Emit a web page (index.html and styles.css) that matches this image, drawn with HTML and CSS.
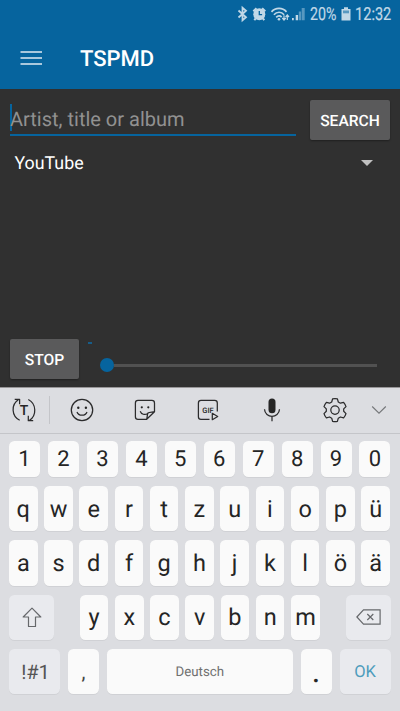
FILE: index.html
```html
<!DOCTYPE html>
<html lang="de">
<head>
<meta charset="utf-8">
<title>TSPMD</title>
<link rel="stylesheet" href="styles.css">
</head>
<body>
<div class="screen">
  <header class="header">
    <div class="status">
      <svg class="status-icons" width="70" height="18" viewBox="0 0 70 18">
        <path d="M1.500 5.500 9 12.300l-3.500 3V2.800L9 5.800 1.500 12.500" fill="none" stroke="currentColor" stroke-width="1.800"/>
        <circle cx="22.300" cy="9.200" r="6" fill="currentColor"/>
        <path d="M16.300 6.200l3.200-3M25.100 3.200l3.200 3M18.700 13.500l-1.400 1.700M25.900 13.500l1.400 1.700" stroke="currentColor" stroke-width="2"/>
        <path d="M22.300 6v3.700h2.800" stroke="#06649e" stroke-width="1.300" fill="none"/>
        <path d="M34.500 6.900c4-4.600 11-4.600 15 0M36.900 9.700c3-3.300 7.400-3.300 10.200 0M39.200 12.400c1.800-1.900 4-1.900 5.400-.3" fill="none" stroke="currentColor" stroke-width="1.700"/>
        <circle cx="42" cy="14.300" r="1.300" fill="currentColor"/>
        <path d="M47 10.300v4.500M45.300 13 47 15l1.700-2M50.300 15v-4.500M48.600 12l1.700-2 1.700 2" fill="none" stroke="currentColor" stroke-width="1.200"/>
        <path d="M55 13h1.800v2.300H55zM58.700 10h2.400v5.300h-2.400z" fill="currentColor"/>
        <path d="M61.800 6.500h2.300v8.800h-2.300zM64.700 3h3v12.300h-3z" fill="#5798c0"/>
      </svg>
      <span class="percent">20%</span>
      <svg class="battery" width="10" height="14" viewBox="0 0 10 14">
        <path d="M3 .2h4V2h2.500v11.500h-9V2H3z" fill="currentColor"/>
        <path d="M2 3.500h6v2.800H2z" fill="#5798c0"/>
      </svg>
      <span class="clock">12:32</span>
    </div>
    <div class="appbar">
      <svg class="menu" width="22" height="16" viewBox="0 0 22 16"><path d="M.5 2H22M.5 8H22M.5 14H22" stroke="#a9c8dd" stroke-width="2.200"/></svg>
      <h1>TSPMD</h1>
    </div>
  </header>

  <main class="content">
    <div class="search-row">
      <div class="field"><span class="caret"></span><span class="hint">Artist, title or album</span></div>
      <div class="button search">SEARCH</div>
    </div>
    <div class="select"><span>YouTube</span><i class="arrow"></i></div>
    <div class="player">
      <div class="button stop">STOP</div>
      <div class="progress"><span class="time"></span><div class="slider"><i class="thumb"></i><i class="track"></i></div></div>
    </div>
  </main>

  <section class="keyboard">
    <div class="tools">
      <svg width="26" height="26" viewBox="0 0 26 26">
        <path d="M8.700 23.200C.3 19 0 7.500 7.300 2.700M3.700 2.300h4.900v4.900M17.300 2.500c8.300 4.300 8.500 16 1.200 20.800M22.200 23.700h-4.900v-4.900" class="line"/>
        <text x="13" y="18" text-anchor="middle" class="glyph-t">T</text>
      </svg>
      <i class="divider"></i>
      <div class="tool-group">
        <svg width="26" height="26" viewBox="0 0 26 26">
          <circle cx="13" cy="13" r="10.700" class="line"/>
          <circle cx="9.300" cy="10.800" r="1.200"/><circle cx="16.900" cy="10.800" r="1.200"/>
          <path d="M8 15c1.500 4.300 8.500 4.300 10 0" class="line"/>
        </svg>
        <svg width="26" height="26" viewBox="0 0 26 26">
          <path d="M22.500 14.700V6c0-1.700-.8-2.600-2.600-2.600H6C4.200 3.400 3.400 4.300 3.400 6v13.700c0 1.800.8 2.600 2.600 2.600h8.700l7.800-7.600c-3.700.5-5.600.4-6.500 1.300-.8.900-.5 2.800-1.300 6.300M8.200 14.200c1.200 3.200 4.600 4 7.200 2.600" class="line"/>
          <circle cx="9.800" cy="10.300" r="1.100"/><circle cx="16.300" cy="10.300" r="1.100"/>
        </svg>
        <svg width="26" height="26" viewBox="0 0 26 26">
          <path d="M14.500 22.300H6c-1.700 0-2.600-.8-2.600-2.600V6c0-1.700.8-2.600 2.600-2.600h13.700c1.700 0 2.600.8 2.600 2.600v8.500M17.300 16.300v6.400l5.400-3.200z" class="line"/>
          <text x="13" y="15.500" text-anchor="middle" class="glyph-gif">GIF</text>
        </svg>
        <svg width="26" height="26" viewBox="0 0 26 26">
          <rect x="9.500" y="1.500" width="7" height="14.800" rx="3.500"/>
          <path d="M5.500 12.300c.5 9.300 14.500 9.300 15 0M13 19.300v5" class="line"/>
        </svg>
        <svg width="26" height="26" viewBox="0 0 26 26">
          <path d="M10.600 1.800q2.400-.5 4.800 0l.9 3.200 2.100 1.200 3.200-.8q1.700 1.900 2.400 4.200l-2.300 2.300v2.400l2.300 2.300q-.7 2.300-2.400 4.200l-3.200-.8-2.100 1.200-.9 3.200q-2.400.5-4.800 0l-.9-3.200-2.100-1.200-3.200.8Q2.700 18.900 2 16.600l2.300-2.300v-2.400L2 9.600q.7-2.300 2.400-4.200l3.200.8L9.700 5z" class="line"/>
          <circle cx="13" cy="13.100" r="4.200" class="line"/>
        </svg>
      </div>
      <svg width="16" height="10" viewBox="0 0 16 10"><path d="M1.200 1.500 8 8.200l6.800-6.700" fill="none" stroke="#75777a" stroke-width="1.100"/></svg>
    </div>
    <div class="keys">
      <div class="row numbers"><b>1</b><b>2</b><b>3</b><b>4</b><b>5</b><b>6</b><b>7</b><b>8</b><b>9</b><b>0</b></div>
      <div class="row full"><b>q</b><b>w</b><b>e</b><b>r</b><b>t</b><b>z</b><b>u</b><b>i</b><b>o</b><b>p</b><b>ü</b></div>
      <div class="row full"><b>a</b><b>s</b><b>d</b><b>f</b><b>g</b><b>h</b><b>j</b><b>k</b><b>l</b><b>ö</b><b>ä</b></div>
      <div class="row lower">
        <b class="alt side"><svg width="20" height="21" viewBox="0 0 20 21"><path d="M10 1.200 18.800 10h-5.300v9.500h-7V10H1.200z" fill="none" stroke="#66686b" stroke-width="1.200" stroke-linejoin="round"/></svg></b>
        <div class="row letters"><b>y</b><b>x</b><b>c</b><b>v</b><b>b</b><b>n</b><b>m</b></div>
        <b class="alt side"><svg width="25" height="16" viewBox="0 0 25 16"><path d="M.9 8 7.500.9h16.600v14.200H7.500zM11.300 5l6 6M17.300 5l-6 6" fill="none" stroke="#66686b" stroke-width="1.200"/></svg></b>
      </div>
      <div class="row bottom">
        <b class="alt wide sym">!#1</b><b class="mark comma">,</b><b class="space">Deutsch</b><b class="mark dot">.</b><b class="alt wide ok">OK</b>
      </div>
    </div>
  </section>
</div>
</body>
</html>
```
FILE: styles.css
```css
* { box-sizing: border-box; }
body { margin: 0; font-family: Roboto, "Liberation Sans", sans-serif; text-rendering: geometricPrecision; }
.screen { width: 400px; height: 711px; overflow: hidden; display: flex; flex-direction: column; background: #303030; }
svg { display: block; flex: none; }

.header { height: 89px; background: #06649e; }
.status { height: 28px; display: flex; align-items: center; color: #c1d8e7; padding-left: 237px; font-size: 18px; line-height: 28px; }
.status-icons { margin-right: 2.500px; }
.percent, .clock { display: block; transform: scaleX(.79); transform-origin: left; white-space: nowrap; padding-top: 1px; -webkit-text-stroke: .2px currentColor; }
.percent { width: 31px; }
.battery { margin-right: 4px; }
.clock { width: 38px; transform: scaleX(.81); }
.appbar { height: 61px; display: flex; align-items: center; padding-left: 20px; }
.menu { margin: -2px 38px 0 0; }
h1 { margin: 1px 0 0; padding-top: 1px; font-size: 22px; font-weight: 500; color: #fff; line-height: 28px; }

.content { height: 298px; padding: 11px 10px 8px; display: flex; flex-direction: column; color: #fff; }
.search-row { display: flex; justify-content: space-between; height: 40px; }
.field { width: 286px; height: 36px; border-bottom: 2px solid #06649e; display: flex; align-items: center; color: #919191; font-size: 20px; padding-top: 4px; }
.caret { width: 2px; height: 27px; margin-right: -2px; background: #06649e; margin-top: -3px; }
.button { height: 40px; border-radius: 2px; background: #5a5a5b; box-shadow: 0 1px 2px rgba(0,0,0,.35); display: flex; align-items: center; justify-content: center; font-size: 15.600px; font-weight: 500; padding-top: 2px; }
.search { width: 80px; }
.stop { width: 69px; }
.select { height: 45px; display: flex; align-items: center; justify-content: space-between; padding: 1px 17px 0 4.500px; font-size: 17.800px; }
.select span { padding-top: 1px; }
.arrow { width: 0; height: 0; border: 6px solid transparent; border-top-color: #c1c1c1; border-bottom: 0; }
.player { margin-top: auto; height: 40px; display: flex; }
.progress { margin-left: 9px; width: 289px; padding-top: 3px; }
.time { display: block; width: 4px; height: 2px; background: #175d89; }
.slider { display: flex; align-items: center; height: 14px; margin: 14px 0 0 12px; }
.thumb { width: 14px; height: 14px; border-radius: 50%; background: #06649e; }
.track { flex: 1; height: 3px; background: #515151; }

.keyboard { flex: 1; background: #dcdde1; }
.tools { height: 47px; border-top: 1px solid #989698; border-bottom: 1px solid #c4c5c9; display: flex; align-items: center; padding: 0 13px 1px 11px; fill: #252525; }
.line { fill: none; stroke: #2b2b2c; stroke-width: 1.250; stroke-linejoin: round; }
.divider { width: 1px; height: 28px; background: #c4c5c9; margin: 0 18.500px 0 12px; }
.tool-group { width: 279.500px; margin-right: 23px; display: flex; justify-content: space-between; }
.glyph-t { font-size: 14px; font-weight: 500; }
.glyph-gif { font-size: 7.500px; font-weight: 500; }
.keys { padding: 7px 9.500px 0 9px; display: grid; gap: 9px; }
.row { display: flex; gap: 6.700px; height: 45.300px; }
.row b { flex: 1; min-width: 0; border-radius: 5.500px; background: #fafafa; box-shadow: 0 1px 0 rgba(0,0,0,.05); color: #252525; display: flex; align-items: center; justify-content: center; font-size: 23.500px; font-weight: 400; }
.row.full { margin-right: .7px; }
.row.numbers { gap: 7.900px; height: 36px; }
.row.numbers b { font-size: 22px; padding-top: 1.500px; }
.row.lower { gap: 0; justify-content: space-between; }
.letters { width: 240px; }
.row .side { flex: none; width: 45px; }
.row .alt { background: #e9eaee; }
.row.bottom { gap: 8px; }
.row .wide { flex: none; width: 51px; }
.row .mark { flex: none; width: 31px; }
.row .comma { font-size: 20px; padding-top: 1px; color: #444; }
.row .dot { font-size: 27px; font-weight: 500; padding-top: 2px; }
.row .sym { font-size: 20px; color: #555; padding: 1px 0 0 2px; }
.row .space { font-size: 13.300px; color: #707070; padding-top: 2px; }
.row .ok { font-size: 16.500px; color: #4d9cbc; padding-top: 2px; }
```
